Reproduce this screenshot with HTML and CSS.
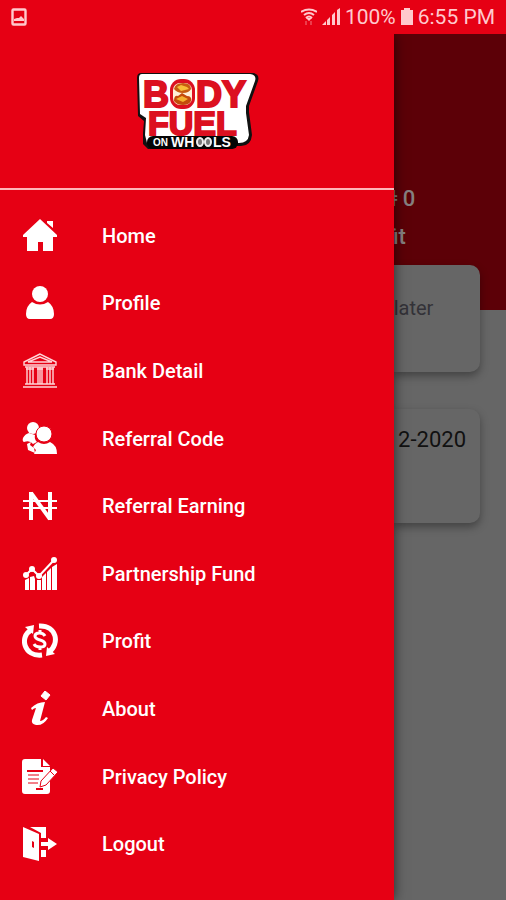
FILE: index.html
```html
<!DOCTYPE html>
<html lang="en">
<head>
<meta charset="utf-8">
<meta name="viewport" content="width=device-width, initial-scale=1">
<title>Body Fuel on Wheels</title>
<link rel="stylesheet" href="styles.css">
</head>
<body>
<header class="status">
  <svg class="status-shot" viewBox="0 0 16 18" aria-hidden="true"><rect x="1.500" y="1.500" width="13" height="15" rx="1" fill="none" stroke="currentColor" stroke-width="2.400"/><path fill="currentColor" d="M3 13v-2l3-1 2 0 2-2 3 3v2z"/></svg>
  <div class="status-right">
    <svg class="status-wifi" viewBox="0 0 16 18" aria-hidden="true"><g fill="none" stroke="currentColor" stroke-width="2"><path d="M0 4Q8-1 16 4M3 7Q8 3 13 7M5 10Q8 7 11 10"/></g><path fill="currentColor" d="M5 10h6l-3 3z"/><path d="M5 17v-4M10 13v4" stroke="currentColor" opacity=".6"/></svg>
    <svg class="status-signal" viewBox="0 0 18 18" aria-hidden="true"><path fill="currentColor" d="M0 17l4-4v4zM5 12l3-3v8H5zM10 7l3-3v13h-3zM15 2l3-2v17h-3z"/></svg>
    <span>100%</span>
    <svg class="status-battery" viewBox="0 0 12 18" aria-hidden="true"><path fill="currentColor" d="M3 0h6v2h3v15H0V2h3z"/></svg>
    <time>6:55 PM</time>
  </div>
</header>
<div class="screen">
  <aside class="drawer">
    <div class="brand">
      <svg class="logo" viewBox="0 0 126 82" role="img" aria-label="Body Fuel on Wheels">
        <path d="M7 3H119Q126 4 124 11L115 36V42L118 65Q117 76 107 76H101L98 79H14L9 74V63L10 51 4 46 3 8Q3 3 7 3Z" fill="#111"/>
        <path d="M8 4H116Q123 5 121 11L112 36V43L115 65Q114 73 105 73H13L11 65 12 48 6 44 5 8Q5 4 8 4Z" fill="#fff"/>
        <g class="logo-word">
          <text x="9" y="37" font-size="36">B</text>
          <text x="62" y="37" font-size="36">D</text>
          <text x="88" y="37" font-size="36">Y</text>
          <text x="14" y="65" font-size="34">FUEL</text>
        </g>
        <rect x="36" y="9" width="25" height="30" rx="11" fill="#dc1020"/>
        <rect x="39" y="13" width="19" height="22" rx="7" fill="#fff0d8"/>
        <path d="M40 19q1-6 9-6t8 6q-2 4-8 4t-9-4z" fill="#c75d10"/><path d="M43 17l4-2 6 2 2 2-8 2z" fill="#f7bd38"/>
        <path d="M40 31q0-6 4-5l4-3 5 3q5 0 4 5-2 4-8 4t-9-4z" fill="#c44b0b"/><path d="M42 29l6-3 6 3-5 3z" fill="#f4b02e"/>
        <rect x="13" y="66" width="91" height="13" rx="6" fill="#050505"/>
        <g class="logo-tag"><text x="19" y="76" font-size="10">ON</text><text x="37" y="77" font-size="14">WH</text><text x="79" y="77" font-size="14">LS</text></g>
        <g fill="#777" stroke="#eee" stroke-width="2"><ellipse cx="66" cy="72" rx="3" ry="4"/><ellipse cx="74" cy="72" rx="3" ry="4"/></g>
      </svg>
    </div>
    <nav class="menu">
      <a href="#"><svg viewBox="0 0 36 36" aria-hidden="true"><path d="M18 1L1 17v2h4v14h11v-9h5v9h10V19h4v-2zM25 3h6v7l-6-5z"/></svg><span>Home</span></a>
      <a href="#"><svg viewBox="0 0 36 36" aria-hidden="true"><circle cx="18" cy="9" r="8"/><path d="M10 17q8 5 16 0 6 4 6 12 0 5-4 5H8q-4 0-4-5 0-8 6-12z"/></svg><span>Profile</span></a>
      <a href="#"><svg class="bank" viewBox="0 0 36 36" aria-hidden="true"><path d="M18 1L2 9v3h32V9zM6 9l12-5 12 5zM3 14h30M1 34h34M3 31h30M5 14v17M8 14v17M11 14v17M16 14v17M18 14v17M20 14v17M25 14v17M28 14v17M31 14v17M4 16h8M15 16h6M24 16h8"/></svg><span>Bank Detail</span></a>
      <a href="#"><svg viewBox="0 0 36 36" aria-hidden="true"><circle cx="11" cy="7" r="6"/><path d="M7 12l6 2q-1 4 2 7l-4 2q-3-4-9-2-2-1-1-4 2-4 6-5zM5 23l4-2-1 3 4 3 1 5-7-3z"/><circle class="cutout" cx="22" cy="13" r="8"/><path d="M16 21q6 4 12 0 7 3 7 12H12l2-4-3-3q1-3 5-5z"/></svg><span>Referral Code</span></a>
      <a href="#"><svg class="line" viewBox="0 0 36 36" aria-hidden="true"><path stroke-width="4" d="M9 32V4M28 4v28"/><path stroke-width="4" d="M9 5l19 26"/><path stroke-width="2" d="M1 13h34M1 20h34"/></svg><span>Referral Earning</span></a>
      <a href="#"><svg viewBox="0 0 36 36" aria-hidden="true"><path d="M3 24l4-2v12H3zM8 21l4-1 1 3v11H8zM15 24h4v10h-4zM20 21l4-4v17h-4zM25 16l4-4v22h-4zM30 11l5-3v26h-5z"/><path fill="none" stroke="currentColor" stroke-width="2" d="M4 19l6-6 7 7L32 4"/><circle cx="4" cy="19" r="3"/><circle cx="10" cy="13" r="3"/><circle cx="17" cy="20" r="3"/><circle cx="32" cy="4" r="3"/></svg><span>Partnership Fund</span></a>
      <a href="#"><svg class="line" viewBox="0 0 36 36" aria-hidden="true"><path stroke-width="5" d="M20 32C2 34-3 14 9 7M17 3c18-1 21 18 10 26"/><path fill="currentColor" stroke="none" d="M3 4l9-2-1 9zM33 31l-9 2 1-9z"/><path stroke-width="3" d="M23 13c-2-4-10-4-10 0 0 5 10 3 10 8 0 4-9 4-11 0M18 7v3M18 24v3"/></svg><span>Profit</span></a>
      <a href="#"><svg viewBox="0 0 36 36" aria-hidden="true"><path d="M23 0l5 4-4 5-5-4z" stroke="currentColor" stroke-linejoin="round"/><path d="M9 17q6-6 14-6l-5 19q3 0 6-4l2 1q-5 8-12 7-5-1-4-5l4-12q-2 0-4 2z"/></svg><span>About</span></a>
      <a href="#"><svg viewBox="0 0 36 36" aria-hidden="true"><path d="M3 0h16v8h9v24q0 3-3 3H3q-3 0-3-3V3q0-3 3-3zM21 0l7 7h-7z"/><path fill="none" stroke="#e60014" stroke-width="2" d="M5 12h16"/><path fill="none" stroke="#e60014" d="M6 16h11M6 20h11M6 24h10"/><path stroke="#e60014" stroke-width="2" d="M14 30h7"/><path stroke="#e60014" d="M31 9l5 4-12 13-6 2 1-6z"/><path stroke="#e60014" d="M28 12l4 4"/></svg><span>Privacy Policy</span></a>
      <a href="#"><svg viewBox="0 0 36 36" aria-hidden="true"><path fill-rule="evenodd" d="M1 1l16 7v27L1 31zM10 15v6l2 1v-6z"/><path d="M8 1h16v11h-5V7zM19 16h7v-4l9 6-9 6v-4h-7zM19 24h5v7h-5z"/></svg><span>Logout</span></a>
    </nav>
  </aside>
  <main class="page">
    <section class="hero"><p class="amount">₦ 0</p><p class="caption">fit</p></section>
    <section class="card notice"><p>later</p></section>
    <section class="card date"><p>2-2020</p></section>
  </main>
</div>
</body>
</html>
```
FILE: styles.css
```css
* { box-sizing: border-box; }
body {
  margin: 0;
  min-height: 100vh;
  display: flex;
  flex-direction: column;
  background: #666;
  font-family: Roboto, "Liberation Sans", sans-serif;
}
p { margin: 0; }
svg { display: block; flex: none; }
.status {
  height: 34px;
  padding: 0 11px;
  display: flex;
  align-items: center;
  justify-content: space-between;
  background: #e60014;
  color: #ffc9cd;
  font-size: 21px;
  line-height: 34px;
}
.status-right { display: flex; align-items: center; gap: 5px; }
.status-shot, .status-wifi { width: 16px; height: 18px; }
.status-signal { width: 18px; height: 18px; }
.status-battery { width: 12px; height: 18px; }
.screen { flex: 1; display: flex; }
.drawer {
  width: 77.8%;
  display: flex;
  flex-direction: column;
  background: #e60014;
  color: #fff;
  box-shadow: 0 0 12px rgba(0, 0, 0, .6);
  clip-path: inset(0 -20px 0 0);
  z-index: 1;
}
.brand {
  height: 156px;
  display: flex;
  justify-content: center;
  align-items: center;
  border-bottom: 2px solid #ffb5b9;
}
.logo { width: 126px; height: 82px; }
.logo-word { fill: #dc1020; stroke: #dc1020; stroke-width: 2; font-family: "Liberation Sans", sans-serif; font-weight: 700; }
.logo-tag { fill: #fff; font-family: "Liberation Sans", sans-serif; font-weight: 700; }
.menu {
  flex: 1;
  display: grid;
  grid-auto-rows: 1fr;
  padding: 12px 0 22px;
}
.menu a {
  display: flex;
  align-items: center;
  gap: 44px;
  padding-left: 22px;
  color: #fff;
  font-size: 20px;
  font-weight: 500;
  line-height: 24px;
  text-decoration: none;
}
.menu svg { width: 36px; height: 36px; fill: currentColor; }
.menu .line { fill: none; stroke: currentColor; }
.menu .bank { fill: none; stroke: #ffd4d7; stroke-width: 1.4; }
.menu .cutout { stroke: #e60014; stroke-width: 1; }
.page { flex: 1; min-width: 0; overflow: hidden; }
.hero {
  height: 276px;
  padding-top: 148px;
  background: #5c0007;
  color: #858080;
  font-size: 22px;
  font-weight: 500;
  line-height: 34px;
}
.amount { margin-left: -14px; }
.caption { margin-top: 4px; margin-left: -8px; }
.card {
  margin-right: 26px;
  border-radius: 0 10px 10px 0;
  background: #666;
  box-shadow: 0 4px 8px rgba(0, 0, 0, .35);
}
.notice {
  height: 107px;
  margin-top: -45px;
  position: relative;
  padding-top: 31px;
  color: #333238;
  font-size: 20px;
  line-height: 24px;
}
.date {
  height: 114px;
  margin-top: 37px;
  padding: 18px 14px 0 0;
  color: #111;
  font-size: 22px;
  line-height: 26px;
  text-align: right;
}
```
